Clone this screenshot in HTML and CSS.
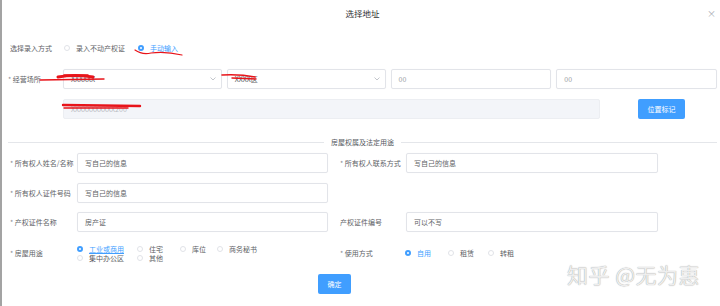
FILE: index.html
```html
<!DOCTYPE html>
<html>
<head>
    <title>选择地址</title>
    <meta charset="UTF-8">
    <link rel="stylesheet" href="styles.css">
</head>
<body>
<section class="dialog">
    <header class="dialog-head">
        <span></span>
        <span class="dialog-title">选择地址</span>
        <span class="close">×</span>
    </header>

    <div class="mode-row">
        <span class="mode-label">选择录入方式</span>
        <label class="radio"><i class="dot"></i>录入不动产权证</label>
        <label class="radio on"><i class="dot"></i>手动输入</label>
    </div>

    <div class="addr-row">
        <span class="addr-label"><em>*</em> 经营场所</span>
        <div class="boxes">
            <div class="box select"><span>XXXXXX</span>
                <svg class="chev" width="6" height="4" viewBox="0 0 6 4"><polyline points="0.5,0.5 3,3 5.5,0.5" fill="none" stroke="#b4b8bf" stroke-width="0.8"/></svg>
            </div>
            <div class="box select"><span>XXXX区</span>
                <svg class="chev" width="6" height="4" viewBox="0 0 6 4"><polyline points="0.5,0.5 3,3 5.5,0.5" fill="none" stroke="#b4b8bf" stroke-width="0.8"/></svg>
            </div>
            <div class="box light">00</div>
            <div class="box light">00</div>
        </div>
    </div>

    <div class="addr-row">
        <span class="addr-label"></span>
        <div class="box disabled">XXXXXXXXXXX200</div>
        <button class="btn mark">位置标记</button>
    </div>

    <div class="divider">
        <span class="line"></span>
        <span>房屋权属及法定用途</span>
        <span class="line"></span>
    </div>

    <div class="form-row row-a">
        <div class="half">
            <span class="f-label"><em>*</em> 所有权人姓名/名称</span>
            <div class="box">写自己的信息</div>
        </div>
        <div class="half right">
            <span class="f-label"><em>*</em> 所有权人联系方式</span>
            <div class="box">写自己的信息</div>
        </div>
    </div>

    <div class="form-row row-b">
        <div class="half">
            <span class="f-label"><em>*</em> 所有权人证件号码</span>
            <div class="box">写自己的信息</div>
        </div>
    </div>

    <div class="form-row row-c">
        <div class="half">
            <span class="f-label"><em>*</em> 产权证件名称</span>
            <div class="box">房产证</div>
        </div>
        <div class="half right">
            <span class="f-label">产权证件编号</span>
            <div class="box">可以不写</div>
        </div>
    </div>

    <div class="form-row row-d">
        <div class="half">
            <span class="f-label"><em>*</em> 房屋用途</span>
            <div class="use-grid">
                <label class="radio on"><i class="dot"></i><u>工业或商用</u></label>
                <label class="radio"><i class="dot"></i>住宅</label>
                <label class="radio"><i class="dot"></i>库位</label>
                <label class="radio"><i class="dot"></i>商务秘书</label>
                <label class="radio"><i class="dot"></i>集中办公区</label>
                <label class="radio"><i class="dot"></i>其他</label>
            </div>
        </div>
        <div class="half right">
            <span class="f-label"><em>*</em> 使用方式</span>
            <div class="way-group">
                <label class="radio on w1"><i class="dot"></i>自用</label>
                <label class="radio w2"><i class="dot"></i>租赁</label>
                <label class="radio"><i class="dot"></i>转租</label>
            </div>
        </div>
    </div>

    <footer class="dialog-foot">
        <button class="btn ok">确定</button>
    </footer>
</section>

<!-- red marks drawn over the screenshot -->
<svg class="scribbles" width="720" height="306" viewBox="0 0 720 306">
    <g fill="none" stroke="#e8141a" stroke-linecap="round">
        <path d="M135 50 Q142 55 151 53 Q165 51 182 55" stroke-width="1.2"/>
        <path d="M40 80 L104 79" stroke-width="1.4"/>
        <path d="M58 77 Q75 74 93 77" stroke-width="3"/>
        <path d="M64 75 L88 75" stroke-width="1.5"/>
        <path d="M222 75 Q240 74 255 77" stroke-width="1.6"/>
        <path d="M232 78 L256 79" stroke-width="1.4"/>
        <path d="M63 105 L140 106" stroke-width="2.4"/>
        <path d="M64 108 L128 108" stroke-width="1.4"/>
    </g>
</svg>

<div class="watermark">知乎 @无为惠</div>
</body>
</html>
```

FILE: styles.css
```css
    body {
        margin: 0;
        width: 720px;
        height: 306px;
        overflow: hidden;
        position: relative;
        background: #fff;
        border-left: 2px solid #a3a3a3;
        box-sizing: border-box;
        font-family: "Noto Sans CJK SC", "Noto Sans", sans-serif;
        font-size: 7px;
        color: #606266;
    }

    em {
        font-style: normal;
        color: #8a8d93;
    }

    .dialog {
        padding: 0 3px 0 6px;
    }

    .dialog-head {
        height: 26px;
        display: grid;
        grid-template-columns: 1fr auto 1fr;
        align-items: center;
    }

    .dialog-title {
        font-size: 8.5px;
        color: #303133;
    }

    .close {
        justify-self: end;
        margin-right: 1px;
        font-size: 9px;
        color: #a8abb2;
    }

    /* radios */
    .radio {
        display: inline-flex;
        align-items: center;
        gap: 6px;
        white-space: nowrap;
    }

    .dot {
        width: 6px;
        height: 6px;
        border: 1px solid #e1e3e8;
        border-radius: 50%;
        box-sizing: border-box;
        background: #fff;
    }

    .radio.on { color: #409eff; }
    .radio.on .dot { border: 2px solid #409eff; }

    .mode-row {
        margin-top: 15px;
        height: 14px;
        display: flex;
        align-items: center;
        padding-left: 2px;
    }

    .mode-label { width: 54px; }
    .mode-row .radio { margin-right: 13px; }

    /* address */
    .addr-row {
        display: flex;
        align-items: center;
        margin-top: 14px;
    }
    .addr-row + .addr-row { margin-top: 10px; }

    .addr-label { width: 55px; flex: none; }

    .boxes {
        flex: 1;
        display: flex;
        gap: 5px;
    }
    .boxes .box { flex: 1; }

    .box {
        height: 20px;
        border: 1px solid #e2e4e9;
        border-radius: 2px;
        box-sizing: border-box;
        padding: 0 7px;
        display: flex;
        align-items: center;
        color: #606266;
        box-shadow: 0 0 1px rgba(0,0,0,0.06);
    }
    .box.light { color: #9a9da3; }

    .select { justify-content: space-between; padding-right: 5px; }

    .disabled {
        width: 537px;
        background: #f3f5f9;
        border-color: #eceef2;
        color: #b8bbc1;
        box-shadow: none;
    }

    .btn {
        height: 20px;
        border: none;
        border-radius: 2px;
        background: #409eff;
        color: #fff;
        font-family: inherit;
        font-size: 7px;
        padding: 0;
    }
    .mark { width: 47px; margin-left: 38px; }

    .divider {
        margin-top: 18px;
        height: 10px;
        display: flex;
        align-items: center;
        gap: 7px;
        color: #55585e;
    }
    .divider .line {
        flex: 1;
        height: 1px;
        background: #e4e6ea;
    }

    /* form rows */
    .form-row { display: flex; align-items: center; }
    .row-a { margin-top: 6px; }
    .row-b { margin-top: 10px; }
    .row-c { margin-top: 9px; }
    .row-d { margin-top: 12px; }

    .half { display: flex; align-items: center; }
    .half .box { width: 251px; }
    .half.right { margin-left: 12px; }
    .half.right .box { width: 252px; }

    .f-label {
        width: 67px;
        padding-left: 2px;
        flex: none;
    }
    .right .f-label { width: 66px; padding-left: 0; }

    .use-grid {
        width: 251px;
        display: grid;
        grid-template-columns: 60px 43px 37px auto;
        grid-auto-rows: 9px;
    }
    .use-grid u { text-decoration-color: #409eff; }

    .way-group { display: flex; margin-left: -1px; }
    .way-group .w1 { width: 43px; }
    .way-group .w2 { width: 40px; }

    .dialog-foot {
        margin-top: 12px;
        padding-left: 310px;
    }
    .ok { width: 33px; }

    /* overlays */
    .scribbles {
        position: absolute;
        left: -2px;
        top: 0;
        pointer-events: none;
    }

    .watermark {
        position: absolute;
        left: 565px;
        top: 259px;
        font-size: 21px;
        letter-spacing: 0.5px;
        color: #eeeeee;
        text-shadow: 0 0 1px #8e8e8e;
        white-space: nowrap;
    }
```
